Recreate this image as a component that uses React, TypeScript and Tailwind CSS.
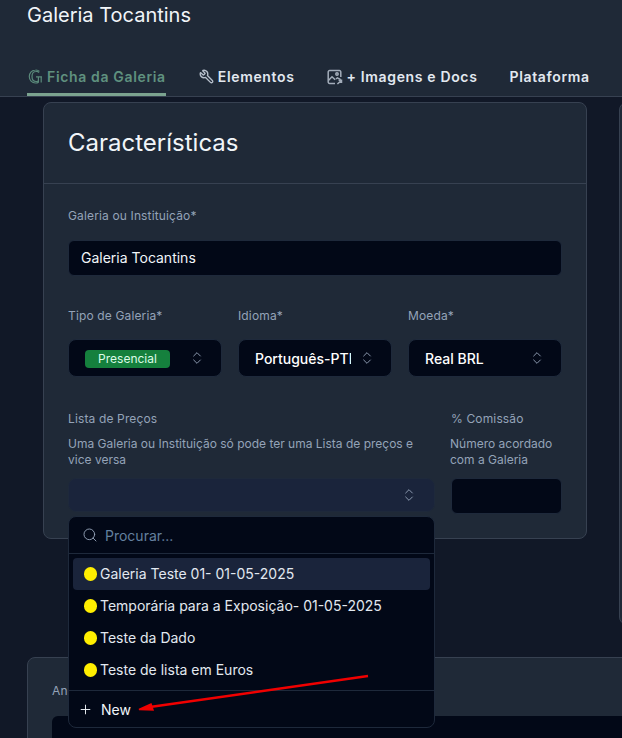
import { ChevronsUpDown, Plus, Search, Wrench } from "lucide-react";

const labelClass = "text-[12px] leading-4 text-[#94a3b8] tracking-[0.14px]";
const helpClass = "text-[12px] leading-4 text-[#94a3b8]";
const triggerClass =
  "h-[38px] rounded-lg border border-[#1e293b] bg-[#020817] flex items-center justify-between";

const listas = [
  "Galeria Teste 01- 01-05-2025",
  "Temporária para a Exposição- 01-05-2025",
  "Teste da Dado",
  "Teste de lista em Euros",
];

const GIcon = () => (
  <svg width="15" height="15" viewBox="0 0 15 15" fill="none" stroke="#5a8a7b" strokeWidth="1.2">
    <path d="M11.500 2.400A5.500 6 0 0 0 7.500 1C4 1 1.300 3.800 1.300 7.500S4 14 7.500 14c1.200 0 2.300-.3 3.100-.8" />
    <path d="M11 3.600A3.400 4.600 0 0 0 8 2.500C5.600 2.500 4 4.700 4 7.500s1.600 5 4 5c.9 0 1.700-.2 2.300-.6" />
    <path d="M8 7.800h6M10.400 7.800v5.800M13.200 7.800v5.800" />
  </svg>
);

const ImageIcon = () => (
  <svg width="16" height="16" viewBox="0 0 16 16" fill="none" stroke="#a3adba" strokeWidth="1.500">
    <path d="M8 14.500H2.600A1.400 1.400 0 0 1 1.200 13.100V2.900A1.400 1.400 0 0 1 2.600 1.500h9.800a1.400 1.400 0 0 1 1.400 1.400V8" />
    <circle cx="10" cy="5" r="1.200" />
    <path d="m1.400 11.500 3.600-3.700 3.200 3M9 10l1.400-1.200 3.400 1.800" />
    <path d="M10.400 15 14.200 11.600M11.600 11.200h2.900v2.900" />
  </svg>
);

const Tab = ({ label, icon, active }: { label: string; icon?: React.ReactNode; active?: boolean }) => (
  <div
    className={`h-full flex items-center gap-[4px] border-b-[3px] pl-[1px] pt-[3px] text-[14px] font-semibold tracking-[0.65px] ${
      active ? "border-[#7ba38f] text-[#5f917f]" : "border-transparent text-[#e2e8f0]"
    }`}
  >
    {icon}
    {label}
  </div>
);

const SelectBox = ({ children, className = "" }: { children: React.ReactNode; className?: string }) => (
  <div className={`${triggerClass} ${className}`}>
    {children}
    <ChevronsUpDown size={16} strokeWidth={1.4} className="text-[#94a3b8] shrink-0" />
  </div>
);

const App = () => {
  return (
    <div
      className="relative h-[738px] w-[622px] overflow-hidden bg-[#111827] text-white"
      style={{ fontFamily: "Inter, 'Noto Sans', sans-serif" }}
    >
      <header className="h-[97px] bg-[#1f2937] border-b border-[#374151] flex flex-col justify-between pl-[27px]">
        <h1 className="text-[20px] leading-7 font-normal text-[#f1f5f9] pt-[1px]">Galeria Tocantins</h1>
        <nav className="h-[39px] flex gap-[31px]">
          <Tab label="Ficha da Galeria" icon={<GIcon />} active />
          <Tab
            label="Elementos"
            icon={<Wrench size={15} strokeWidth={2.2} className="ml-[1px] -scale-x-100 text-[#b6bfcb]" />}
          />
          <Tab label="+ Imagens e Docs" icon={<ImageIcon />} />
          <Tab label="Plataforma" />
        </nav>
      </header>

      <div className="flex gap-8 pl-[43px] pt-[5px] h-[560px]">
        <section className="relative w-[544px] h-[437px] shrink-0 rounded-lg border border-[#374151] bg-[#1f2937]">
          <div className="h-[81px] border-b border-[#374151] pl-[24px] flex items-center">
            <h2 className="text-[24px] font-normal text-[#f1f5f9]">Características</h2>
          </div>
          <div className="px-[24px] pt-[24px]">
            <p className={labelClass}>Galeria ou Instituição*</p>
            <div className="mt-4 h-9 rounded-md border border-[#1e293b] bg-[#020817] flex items-center pl-3 pb-[1px] text-[14px] text-[#f1f5f9]">
              Galeria Tocantins
            </div>

            <div className="mt-8 grid grid-cols-3 gap-4">
              <div>
                <p className={labelClass}>Tipo de Galeria*</p>
                <SelectBox className="mt-[15px] pl-4 pr-[16px]">
                  <span className="mt-[2px] rounded-[4px] bg-[#15803d] py-[1px] w-[85px] text-center text-[12px] leading-4 text-[#dcfce7]">
                    Presencial
                  </span>
                </SelectBox>
              </div>
              <div>
                <p className={labelClass}>Idioma*</p>
                <SelectBox className="mt-[15px] pl-4 pr-[16px] text-[14px] font-medium">
                  <span className="w-[96px] overflow-hidden whitespace-nowrap">Português-PTBR</span>
                </SelectBox>
              </div>
              <div>
                <p className={labelClass}>Moeda*</p>
                <SelectBox className="mt-[15px] pl-4 pr-[16px] text-[14px] font-medium">
                  <span>Real BRL</span>
                </SelectBox>
              </div>
            </div>

            <div className="mt-[34px] flex gap-4">
              <div className="w-[367px] shrink-0">
                <p className={labelClass}>Lista de Preços</p>
                <p className={`${helpClass} mt-[9px]`}>
                  Uma Galeria ou Instituição só pode ter uma Lista de preços e vice versa
                </p>
                <div className="mt-[10px] h-[34px] rounded-lg border border-[#1e293b] bg-[#1a243b] flex items-center justify-end pr-[17px]">
                  <ChevronsUpDown size={16} strokeWidth={1.4} className="text-[#94a3b8]" />
                </div>
              </div>
              <div className="flex-1">
                <p className={labelClass}>% Comissão</p>
                <p className={`${helpClass} mt-[9px] -ml-[1px]`}>Número acordado com a Galeria</p>
                <div className="mt-[10px] h-9 rounded-md border border-[#1e293b] bg-[#020817]" />
              </div>
            </div>
          </div>
        </section>
        <section className="w-[300px] shrink-0 h-[523px] rounded-lg border border-[#374151] bg-[#1f2937]" />
      </div>

      <section className="ml-[27px] h-[200px] w-[700px] rounded-lg border border-[#374151] bg-[#1f2937] pl-[24px] pt-[25px]">
        <p className={labelClass}>Anotações</p>
        <div className="mt-[17px] h-[100px] rounded-md bg-[#020817]" />
      </section>

      {/* Combobox popup */}
      <div className="absolute left-[68px] top-[516px] w-[367px] h-[212px] rounded-lg border border-[#1e293b] bg-[#020817] flex flex-col">
        <div className="h-[37px] shrink-0 border-b border-[#1e293b] flex items-center gap-[7px] pl-[13px]">
          <Search size={16} strokeWidth={1.4} className="text-[#94a3b8]" />
          <span className="text-[14px] text-[#64809f]">Procurar...</span>
        </div>
        <ul className="flex-1 px-1 pt-1">
          {listas.map((item, i) => (
            <li
              key={item}
              className={`h-8 rounded-[4px] flex items-center pl-[11px] pb-[1px] text-[14px] text-[#e2e8f0] ${
                i === 0 ? "bg-[#1a243b]" : ""
              }`}
            >
              <span className="h-[14px] w-[13px] rounded-full bg-[#ffee00] mr-[3px] shrink-0" />
              {item}
            </li>
          ))}
        </ul>
        <div className="h-[37px] shrink-0 border-t border-[#1e293b] flex items-center gap-[8px] pl-[9px] text-[14px] text-[#f1f5f9]">
          <Plus size={15} strokeWidth={1.5} />
          New
        </div>
      </div>

      {/* Annotation arrow */}
      <svg className="absolute left-0 top-0 pointer-events-none" width="622" height="738" fill="none">
        <path d="M368 676 150 707" stroke="#f00000" strokeWidth="2.500" />
        <path d="m139 709.500 12-5.500 2 6z" fill="#f00000" stroke="#f00000" strokeWidth="1.500" />
      </svg>
    </div>
  );
};

export default App;
